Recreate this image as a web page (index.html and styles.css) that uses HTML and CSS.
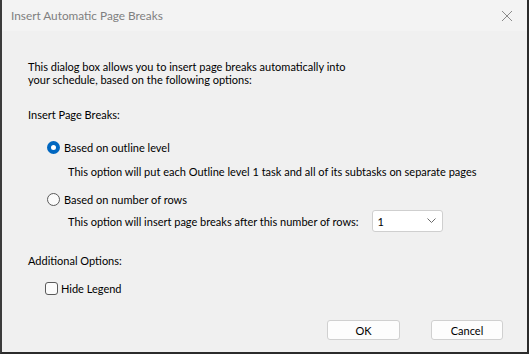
FILE: index.html
```html
<!DOCTYPE html>
<html lang="en">
<head>
    <meta charset="UTF-8">
    <title>Insert Automatic Page Breaks</title>
    <link rel="stylesheet" href="styles.css">
</head>
<body>
    <div class="dialog">
        <div class="titlebar">
            <span class="title">Insert Automatic Page Breaks</span>
            <svg class="close" width="12" height="12" viewBox="0 0 12 12">
                <path d="M1 1 L11 11 M11 1 L1 11" stroke="#8a8a8a" stroke-width="1" fill="none"/>
            </svg>
        </div>
        <div class="content">
            <p class="intro">This dialog box allows you to insert page breaks automatically into<br>your schedule, based on the following options:</p>

            <div class="section-label">Insert Page Breaks:</div>

            <label class="option first">
                <span class="radio checked"></span>
                <span>Based on outline level</span>
            </label>
            <div class="option-desc">This option will put each Outline level 1 task and all of its subtasks on separate pages</div>

            <label class="option second">
                <span class="radio"></span>
                <span>Based on number of rows</span>
            </label>
            <div class="option-desc rows">
                <span>This option will insert page breaks after this number of rows:</span>
                <div class="select">
                    <span>1</span>
                    <svg width="9" height="6" viewBox="0 0 9 6">
                        <path d="M0.5 0.5 L4.5 4.5 L8.5 0.5" stroke="#6a6a6a" stroke-width="1" fill="none"/>
                    </svg>
                </div>
            </div>

            <div class="section-label additional">Additional Options:</div>

            <label class="check-row">
                <span class="checkbox"></span>
                <span>Hide Legend</span>
            </label>

            <div class="buttons">
                <button class="btn">OK</button>
                <button class="btn cancel">Cancel</button>
            </div>
        </div>
    </div>
</body>
</html>
```

FILE: styles.css
```css
html, body {
    margin: 0;
    padding: 0;
}
body {
    font-family: Lato, "Noto Sans", sans-serif;
    font-size: 11px;
    color: #000000;
    background-color: #f0f0f0;
}
.dialog {
    width: 529px;
    height: 354px;
    box-sizing: border-box;
    border-left: 2px solid #3b3b3b;
    border-right: 2px solid #2b2b2b;
    border-bottom: 2px solid #2b2b2b;
    background-color: #f0f0f0;
}
.titlebar {
    height: 31px;
    background-color: #f3f3f3;
    display: flex;
    align-items: center;
    justify-content: space-between;
    padding: 0 14px 0 9px;
}
.title {
    font-size: 11.8px;
    color: #7f7f7f;
}
.close {
    display: block;
}
.content {
    padding: 29px 24px 0 26px;
}
.intro {
    margin: 0;
    line-height: 13px;
}
.section-label {
    margin-top: 22px;
    line-height: 13px;
}
.section-label.additional {
    margin-top: 21px;
    line-height: 16px;
}
.option {
    display: flex;
    align-items: center;
    gap: 4px;
    height: 16px;
    margin-left: 19px;
}
.option.first {
    margin-top: 18px;
}
.option.second {
    margin-top: 12px;
}
.radio {
    width: 13px;
    height: 13px;
    box-sizing: border-box;
    border: 1px solid #5a5a5a;
    border-radius: 50%;
    background-color: #fbfbfb;
}
.radio.checked {
    border: 4px solid #0067c0;
    background-color: #ffffff;
}
.option-desc {
    margin-left: 40px;
    margin-top: 8px;
    height: 16px;
    display: flex;
    align-items: center;
    white-space: nowrap;
}
.option-desc.rows {
    margin-top: 3px;
    height: 22px;
    gap: 13px;
}
.select {
    width: 71px;
    height: 22px;
    box-sizing: border-box;
    border: 1px solid #cfcfcf;
    border-radius: 3px;
    background-color: #ffffff;
    display: flex;
    align-items: center;
    justify-content: space-between;
    padding: 0 6px 0 5px;
}
.check-row {
    display: flex;
    align-items: center;
    gap: 3px;
    height: 16px;
    margin-top: 11px;
    margin-left: 17px;
}
.checkbox {
    width: 13px;
    height: 13px;
    box-sizing: border-box;
    border: 1px solid #5a5a5a;
    border-radius: 3px;
    background-color: #fbfbfb;
}
.buttons {
    display: flex;
    justify-content: flex-end;
    gap: 31px;
    margin-top: 24px;
}
.btn {
    width: 73px;
    height: 20px;
    font-family: inherit;
    font-size: 11px;
    color: #000000;
    background-color: #fdfdfd;
    border: 1px solid #d0d0d0;
    border-radius: 3px;
    padding: 0;
}
.btn.cancel {
    width: 72px;
}
```
